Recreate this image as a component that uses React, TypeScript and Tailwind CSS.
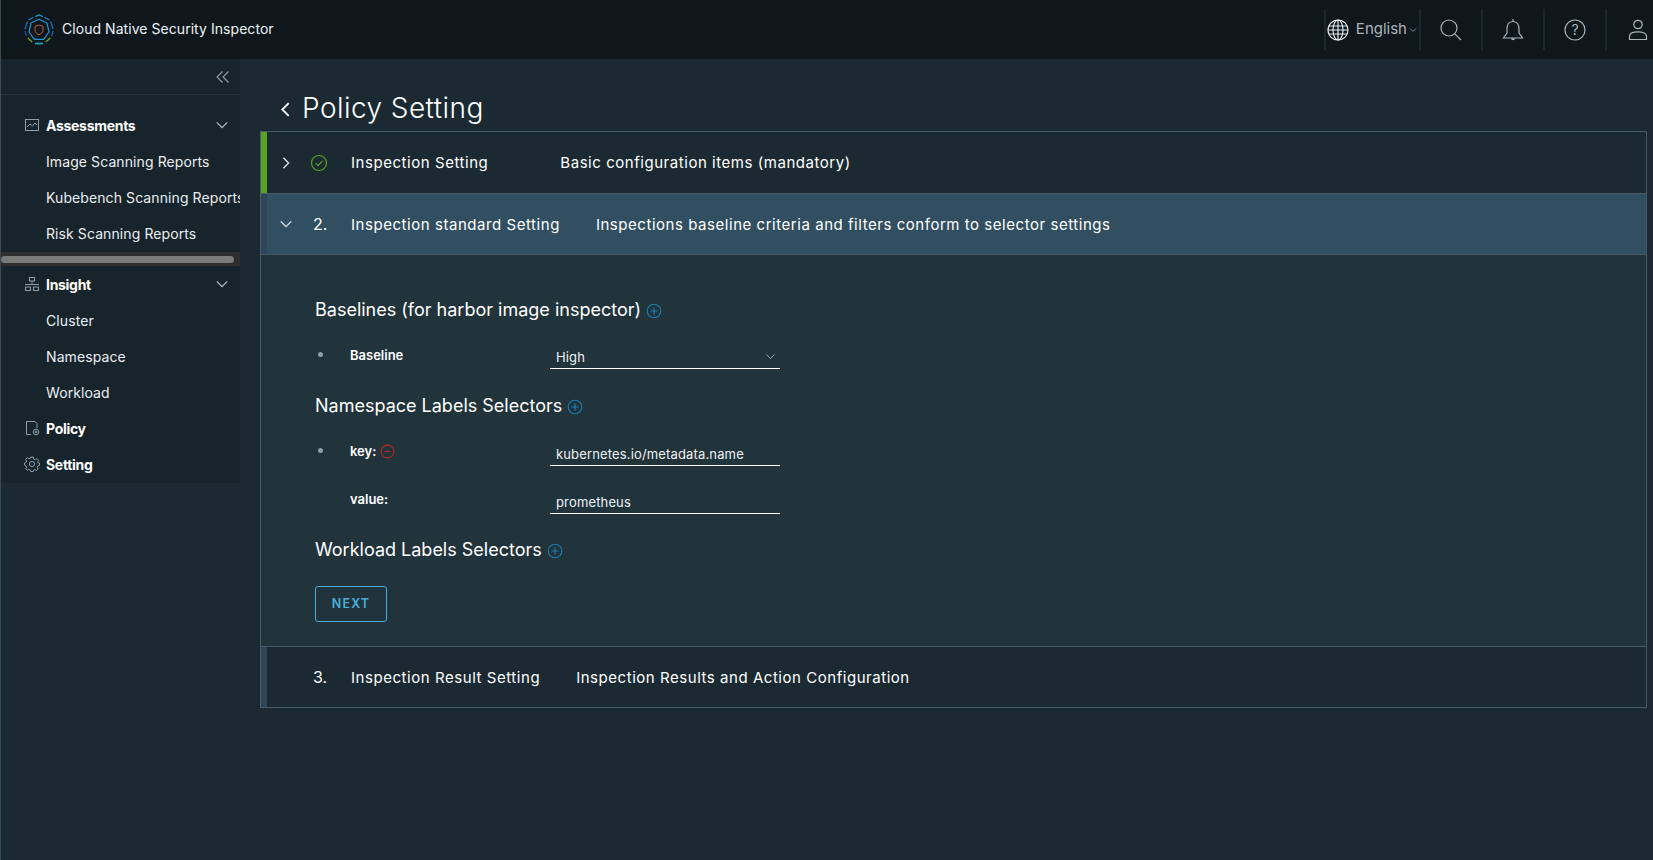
const font = { fontFamily: "Inter, 'Noto Sans', sans-serif" };

function Logo() {
  return (
    <svg width="32" height="32" viewBox="0 0 32 32" fill="none" className="shrink-0">
      <path d="M12.2 2.6 L16 1 L19.8 2.6" stroke="#1b9fc4" strokeWidth="1.3" />
      <path d="M21.5 3.4 L26.6 6" stroke="#1b7fb8" strokeWidth="1.3" />
      <path d="M27.6 7.5 L30 15" stroke="#1b6fb0" strokeWidth="1.3" />
      <path d="M30 17 L28.6 22" stroke="#1d5fa8" strokeWidth="1.3" />
      <path d="M27.2 24 L22.8 28" stroke="#6aa51e" strokeWidth="1.3" />
      <path d="M20 29.5 L12 29.5" stroke="#17a2b8" strokeWidth="1.8" />
      <path d="M9.2 28 L4.8 24" stroke="#6aa51e" strokeWidth="1.3" />
      <path d="M3.4 22 L2 17" stroke="#1d4f98" strokeWidth="1.3" />
      <path d="M2 15 L4.4 7.5" stroke="#1b6fb0" strokeWidth="1.3" />
      <path d="M5.4 6 L10.5 3.4" stroke="#1b7fb8" strokeWidth="1.3" />
      <path d="M16 5.2 L24 9 L26 18 L20.6 25.4 L11.4 25.4 L6 18 L8 9 Z" stroke="#1f96d8" strokeWidth="1.2" strokeLinejoin="round" />
      <path d="M16 11 L20 12.4 V16 C20 18.3 18.2 19.9 16 20.8 C13.8 19.9 12 18.3 12 16 V12.4 Z" stroke="#c96a38" strokeWidth="0.9" />
    </svg>
  );
}

function Chevron({ dir = "down", size = 14, color = "#b6c1c8", sw = 1.4 }: { dir?: "down" | "left" | "right"; size?: number; color?: string; sw?: number }) {
  const d = dir === "down" ? "M2 5 L8 11 L14 5" : dir === "left" ? "M11 2 L5 8 L11 14" : "M5 2 L11 8 L5 14";
  return (
    <svg width={size} height={size} viewBox="0 0 16 16" fill="none" className="shrink-0">
      <path d={d} stroke={color} strokeWidth={sw} />
    </svg>
  );
}

function NavIcon({ kind }: { kind: string }) {
  const c = "#8f9ea8";
  return (
    <svg width="16" height="16" viewBox="0 0 16 16" fill="none" stroke={c} strokeWidth="1" className="shrink-0">
      {kind === "chart" && (
        <>
          <rect x="1.5" y="2.5" width="13" height="11" />
          <path d="M3 10 L6 7 L8.5 9 L11 6 L13 8" />
        </>
      )}
      {kind === "tree" && (
        <>
          <rect x="5.5" y="1.5" width="5" height="3.5" />
          <rect x="1.5" y="11" width="5" height="3.5" />
          <rect x="9.5" y="11" width="5" height="3.5" />
          <path d="M8 5 V8 M1 8.5 H15" />
        </>
      )}
      {kind === "policy" && (
        <>
          <path d="M7 14.5 H2.5 V1.5 H11 L13 3.5 V8" />
          <circle cx="12" cy="12" r="2.8" />
          <circle cx="12" cy="12" r="1" />
        </>
      )}
      {kind === "gear" && (
        <>
          <circle cx="8" cy="8" r="2.6" />
          <path d="M6.8 1 H9.2 L9.7 3 L11.3 3.7 L13 2.7 L14.7 4.4 L13.6 6 L14.3 7 L15.5 7 V9.2 L13.9 9.8 L13.3 11.3 L14.2 13 L12.6 14.6 L11 13.6 L9.7 14.2 L9.2 15.5 H6.8 L6.3 14 L4.8 13.4 L3.2 14.4 L1.6 12.8 L2.6 11.2 L2 9.8 L0.6 9.2 V7 L2 6.4 L2.6 5 L1.6 3.4 L3.3 1.7 L4.9 2.7 L6.3 2.2 Z" />
        </>
      )}
    </svg>
  );
}

function NavGroup({ icon, label, chevron }: { icon: string; label: string; chevron?: boolean }) {
  return (
    <div className="flex h-9 items-center pl-[23px] pr-[11px]">
      <NavIcon kind={icon} />
      <span className="ml-[6px] flex-1 text-[14px] font-bold tracking-[-0.3px] text-white">{label}</span>
      {chevron && <Chevron />}
    </div>
  );
}

function NavItem({ label }: { label: string }) {
  return (
    <div className="flex h-9 items-center overflow-hidden whitespace-nowrap pl-[45px] text-[14px] tracking-[0.09px] text-[#e9eef1]">
      {label}
    </div>
  );
}

function Sep() {
  return <div className="h-[41px] w-[2px] shrink-0 bg-[#1b272e]" />;
}

function Round({ color, minus, size = 16 }: { color: string; minus?: boolean; size?: number }) {
  return (
    <svg width={size} height={size} viewBox="0 0 16 16" fill="none" className="shrink-0">
      <circle cx="8" cy="8" r="6.8" stroke={color} strokeWidth="1.1" />
      <path d={minus ? "M4.8 8 H11.2" : "M8 4.5 V11.5 M4.5 8 H11.5"} stroke={color} strokeWidth="1.2" />
    </svg>
  );
}

function StepHead({ accent, bg, num, title, desc, chevron, descGap = "ml-9", height = "h-[61px]" }: { accent: string; bg: string; num?: string; title: string; desc: string; chevron?: "right" | "down"; descGap?: string; height?: string }) {
  return (
    <div className={`flex items-center ${height} ${bg}`}>
      <div className={`h-full w-[6px] shrink-0 ${accent}`} />
      <div className="flex w-[38px] shrink-0 justify-center">
        {chevron && <Chevron dir={chevron} size={14} color="#e0e6ea" sw={1.5} />}
      </div>
      <div className="flex w-[46px] shrink-0 items-center pl-[8px] text-[16px] font-normal text-white">
        {num ? (
          num
        ) : (
          <svg width="18" height="18" viewBox="0 0 18 18" fill="none" className="-ml-[3px] mt-px">
            <circle cx="9" cy="9" r="7.5" stroke="#5aa220" strokeWidth="1.2" />
            <path d="M5.6 9.2 L8 11.6 L12.6 6.8" stroke="#5aa220" strokeWidth="1.2" />
          </svg>
        )}
      </div>
      <span className="pt-[2px] text-[15px] tracking-[0.55px] text-white">{title}</span>
      <span className={`${descGap} pt-[2px] text-[15px] tracking-[0.54px] text-white`}>{desc}</span>
    </div>
  );
}

function Heading({ children }: { children: string }) {
  return (
    <div className="flex items-center gap-[5px] text-[18px] leading-6 tracking-[0px] text-white">
      <span>{children}</span>
      <span className="mt-[2px]"><Round color="#1a7fb5" /></span>
    </div>
  );
}

function Field({ value, select }: { value: string; select?: boolean }) {
  return (
    <div className={`flex h-6 w-[230px] items-center justify-between border-b border-white pl-[6px] pr-[4px] text-[13px] tracking-[0.15px] text-[#eef2f4] ${select ? "-mt-px" : ""}`}>
      <span className="pt-[2px]">{value}</span>
      {select && <Chevron size={11} color="#aab6bd" sw={1.3} />}
    </div>
  );
}

function Bullet() {
  return <div className="mt-[6px] ml-[3px] h-[5px] w-[5px] rounded-full bg-[#8f9ea8]" />;
}

export default function App() {
  return (
    <div className="flex h-[860px] w-[1653px] flex-col overflow-hidden border-l border-[#3a4a54] bg-[#1b2a32] text-white" style={font}>
      <header className="flex h-[59px] shrink-0 items-center overflow-hidden bg-[#0f171d] pl-[22px] pr-[5px]">
        <Logo />
        <span className="mb-[2px] ml-[7px] flex-1 text-[14px] tracking-[0.05px] text-[#eef2f4]">Cloud Native Security Inspector</span>
        <Sep />
        <svg width="22" height="22" viewBox="0 0 22 22" fill="none" stroke="#e8edf0" strokeWidth="1.15" className="ml-px shrink-0">
          <circle cx="11" cy="11" r="10" />
          <ellipse cx="11" cy="11" rx="5" ry="10" />
          <path d="M11 1 V21 M2 7 H20 M1 11 H21 M2 15 H20" />
        </svg>
        <span className="ml-[7px] text-[15px] tracking-[0px] text-[#a9b4bb]">English</span>
        <span className="ml-[2px] mt-[1px]"><Chevron size={8} color="#a9b4bb" /></span>
        <span className="ml-[2px]"><Sep /></span>
        <div className="flex w-[60px] shrink-0 justify-center">
          <svg width="24" height="24" viewBox="0 0 24 24" fill="none" stroke="#a9b4bb" strokeWidth="1.2">
            <circle cx="10" cy="10" r="8" />
            <path d="M15.8 15.8 L22 22" />
          </svg>
        </div>
        <Sep />
        <div className="flex w-[60px] shrink-0 justify-center">
          <svg width="22" height="24" viewBox="0 0 22 24" fill="none" stroke="#a9b4bb" strokeWidth="1.2">
            <path d="M11 1 V3.5 M11 3.5 C6.5 3.5 5 7 5 11 V15 L1.5 20 H20.5 L17 15 V11 C17 7 15.5 3.5 11 3.5 Z" />
            <path d="M9.5 20.5 A1.6 1.6 0 0 0 12.5 20.5" fill="#a9b4bb" />
          </svg>
        </div>
        <Sep />
        <div className="flex w-[60px] shrink-0 justify-center">
          <svg width="22" height="22" viewBox="0 0 22 22" fill="none" stroke="#a9b4bb" strokeWidth="1.2">
            <circle cx="11" cy="11" r="10" />
            <text x="11" y="16" textAnchor="middle" fontSize="14" fill="#a9b4bb" stroke="none" fontFamily="Inter, sans-serif">?</text>
          </svg>
        </div>
        <Sep />
        <div className="ml-[21px] flex shrink-0">
          <svg width="20" height="22" viewBox="0 0 20 22" fill="none" stroke="#a9b4bb" strokeWidth="1.2" className="shrink-0">
            <circle cx="10" cy="5.5" r="4.2" />
            <path d="M1.5 20.5 V17 C1.5 14.5 5 12.8 10 12.8 C15 12.8 18.5 14.5 18.5 17 V20.5 Z" />
          </svg>
        </div>
      </header>

      <div className="flex min-h-0 flex-1">
        <aside className="w-[239px] shrink-0 self-start bg-[#17242b] pb-px">
          <div className="flex h-[36px] items-center justify-end border-b border-[#22323b] pr-[10px]">
            <svg width="14" height="14" viewBox="0 0 14 14" fill="none" stroke="#8f9ea8" strokeWidth="1.1">
              <path d="M6.5 1.5 L1 7 L6.5 12.5 M12.5 1.5 L7 7 L12.5 12.5" />
            </svg>
          </div>
          <div className="pt-[12px]">
            <NavGroup icon="chart" label="Assessments" chevron />
            <NavItem label="Image Scanning Reports" />
            <NavItem label="Kubebench Scanning Reports" />
            <NavItem label="Risk Scanning Reports" />
          </div>
          <div className="mt-px flex h-[14px] items-center bg-[#2e2e2e] pr-[6px]">
            <div className="h-[7px] flex-1 rounded-full bg-[#7a7a7a]" />
          </div>
          <div>
            <NavGroup icon="tree" label="Insight" chevron />
            <NavItem label="Cluster" />
            <NavItem label="Namespace" />
            <NavItem label="Workload" />
            <NavGroup icon="policy" label="Policy" />
            <NavGroup icon="gear" label="Setting" />
          </div>
        </aside>

        <main className="min-w-0 flex-1 pl-[20px] pr-[6px]">
          <div className="flex h-[72px] items-end pb-[5px] pl-[17px]">
            <div className="flex h-9 items-center">
              <span className="mt-[3px]"><Chevron dir="left" size={17} color="#ffffff" sw={1.7} /></span>
              <h1 className="ml-[8px] text-[28px] leading-9 font-light tracking-[0.45px] text-white">Policy Setting</h1>
            </div>
          </div>
          <section className="border border-[#485a68]">
            <StepHead accent="bg-[#5aa220]" bg="" title="Inspection Setting" desc="Basic configuration items (mandatory)" chevron="right" descGap="ml-[72px]" />
            <div className="border-t border-[#485a68]">
              <StepHead accent="bg-[#2d4657]" bg="bg-[#324f62]" num="2." title="Inspection standard Setting" desc="Inspections baseline criteria and filters conform to selector settings" chevron="down" height="h-[60px]" />
            </div>
            <div className="border-t border-[#485a68] bg-[#21333b] pb-[24px] pl-[54px] pt-[43px]">
              <Heading>Baselines (for harbor image inspector)</Heading>
              <div className="mt-[24px] flex items-start">
                <div className="w-[35px]"><Bullet /></div>
                <div className="w-[200px] text-[13px] font-semibold text-white">Baseline</div>
                <Field value="High" select />
              </div>
              <div className="mt-[25px]"><Heading>Namespace Labels Selectors</Heading></div>
              <div className="mt-[24px] flex items-start">
                <div className="w-[35px]"><Bullet /></div>
                <div className="flex w-[200px] items-center gap-[4px] text-[13px] font-semibold text-white">
                  key: <Round color="#c0281c" minus size={15} />
                </div>
                <Field value="kubernetes.io/metadata.name" />
              </div>
              <div className="mt-[24px] flex items-start">
                <div className="w-[35px]" />
                <div className="w-[200px] text-[13px] font-semibold text-white">value:</div>
                <Field value="prometheus" />
              </div>
              <div className="mt-[24px]"><Heading>Workload Labels Selectors</Heading></div>
              <button className="mt-[24px] flex h-[36px] w-[72px] items-center justify-center rounded-[3px] border border-[#49afd9] text-[12.5px] font-semibold tracking-[1.2px] text-[#49afd9]">
                NEXT
              </button>
            </div>
            <div className="border-t border-[#485a68]">
              <StepHead accent="bg-[#2d4657]" bg="" num="3." title="Inspection Result Setting" desc="Inspection Results and Action Configuration" height="h-[60px]" />
            </div>
          </section>
        </main>
      </div>
    </div>
  );
}
